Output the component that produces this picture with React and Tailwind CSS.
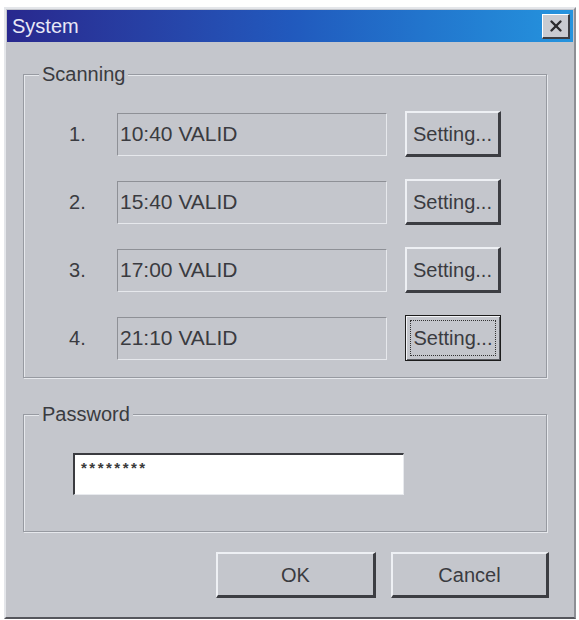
import { X } from "lucide-react";

const times = ["10:40 VALID", "15:40 VALID", "17:00 VALID", "21:10 VALID"];

// Classic raised push button
const PushButton = ({ children, focused, className = "" }) => (
  <button
    className={`flex items-center justify-center bg-[#c4c6cc] text-[#3a3b40] ${
      focused
        ? "border border-[#1c1c1c] shadow-[inset_1px_1px_0_#f2f3f6,inset_-1px_-1px_0_#5a5b60]"
        : "border-t-2 border-l-2 border-b-[3px] border-r-[3px] border-t-[#eef0f4] border-l-[#eef0f4] border-b-[#3c3d42] border-r-[#3c3d42]"
    } ${className}`}
  >
    {focused ? (
      <span className="m-[4px] flex flex-1 self-stretch items-center justify-center border border-dotted border-[#333]">
        {children}
      </span>
    ) : (
      children
    )}
  </button>
);

const Group = ({ title, children, className = "" }) => (
  <fieldset
    className={`w-[524px] border border-[#979aa1] shadow-[inset_1px_1px_0_#e6e8ec,1px_1px_0_#e6e8ec] ${className}`}
  >
    <legend className="ml-[15px] px-[3px] bg-[#c4c6cc] text-[20px] leading-[22px] text-[#3a3b40]">
      {title}
    </legend>
    {children}
  </fieldset>
);

export default function App() {
  return (
    <div
      className="h-[620px] w-[579px] bg-white pt-[7px] pl-[4px]"
      style={{ fontFamily: '"Liberation Sans", Arial, sans-serif' }}
    >
      <div className="flex h-[612px] w-[572px] flex-col border-2 border-t-[#e4e6ea] border-l-[#e4e6ea] border-b-[#55565c] border-r-[#8d8f95] bg-[#c4c6cc] p-[1px]">
        {/* title bar */}
        <div className="flex h-[32px] items-center justify-between bg-gradient-to-r from-[#28288e] via-[#2159bd] to-[#2594de] pl-[5px] pr-[3px]">
          <span className="text-[20px] leading-none text-[#e8e8f6]">System</span>
          <div className="flex h-[25px] w-[28px] items-center justify-center border-t border-l border-t-white border-l-white border-b-2 border-r-2 border-b-[#3c3d42] border-r-[#3c3d42] bg-[#c9cbd1]">
            <X size={18} strokeWidth={3.2} className="text-[#2a2a2e]" />
          </div>
        </div>

        <div className="flex flex-col px-[16px] pt-[21px]">
          <Group title="Scanning">
            <div className="flex flex-col gap-[22px] pl-[45px] pt-[26px] pb-[16px]">
              {times.map((t, i) => (
                <div key={t} className="flex h-[46px] items-center">
                  <span className="w-[48px] text-[20px] text-[#3a3b40]">{i + 1}.</span>
                  <div className="flex h-[43px] w-[270px] items-center border border-t-[#8e9096] border-l-[#8e9096] border-b-[#e6e8ec] border-r-[#e6e8ec] pl-[2px] text-[21px] text-[#3a3b40]">
                    {t.replace(" ", "\u00a0")}
                  </div>
                  <PushButton
                    focused={i === 3}
                    className="ml-[18px] h-[46px] w-[96px] text-[20px]"
                  >
                    Setting...
                  </PushButton>
                </div>
              ))}
            </div>
          </Group>

          <Group title="Password" className="mt-[25px]">
            <div className="pl-[49px] pt-[28px] pb-[36px]">
              <div className="h-[42px] w-[331px] border-t-2 border-l-2 border-t-[#3a3b40] border-l-[#3a3b40] border-b border-r border-b-[#e8eaee] border-r-[#e8eaee] bg-white pl-[6px] pt-[3px] text-[15px] font-bold leading-[20px] tracking-[2.5px] text-[#3a3a3a]">
                ********
              </div>
            </div>
          </Group>

          <div className="mt-[20px] flex justify-end gap-[15px] pr-[8px]">
            <PushButton className="h-[46px] w-[160px] text-[20px]">OK</PushButton>
            <PushButton className="h-[46px] w-[158px] text-[20px]">Cancel</PushButton>
          </div>
        </div>
      </div>
    </div>
  );
}
